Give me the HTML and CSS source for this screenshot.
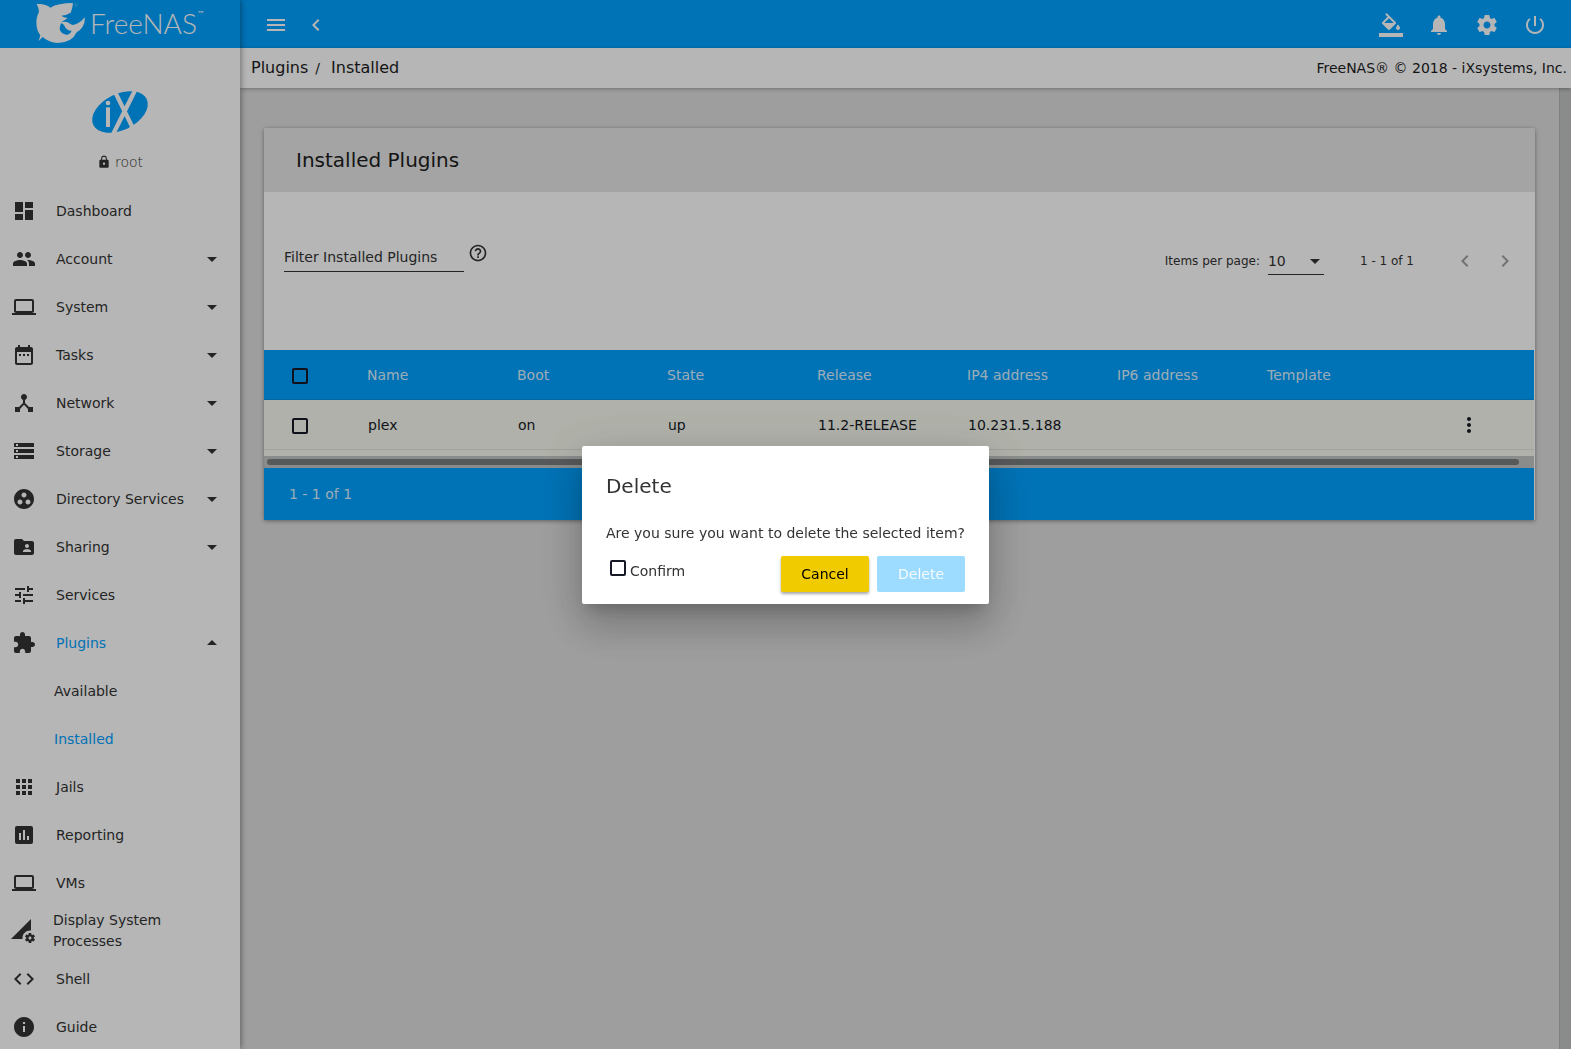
FILE: index.html
```html
<!DOCTYPE html>
<html lang="en">
<head>
<meta charset="utf-8">
<title>FreeNAS - Installed Plugins</title>
<link rel="stylesheet" href="styles.css">
</head>
<body>
<svg class="sprite" aria-hidden="true">
  <symbol id="dashboard" viewBox="0 0 24 24"><path d="M3 13h8V3H3v10zm0 8h8v-6H3v6zm10 0h8V11h-8v10zm0-18v6h8V3h-8z"/></symbol>
  <symbol id="group" viewBox="0 0 24 24"><path d="M16 11c1.66 0 2.99-1.34 2.99-3S17.66 5 16 5s-3 1.34-3 3 1.34 3 3 3zm-8 0c1.66 0 2.99-1.34 2.99-3S9.66 5 8 5 5 6.34 5 8s1.34 3 3 3zm0 2c-2.33 0-7 1.17-7 3.500V19h14v-2.500c0-2.330-4.670-3.500-7-3.500zm8 0c-.29 0-.62.02-.97.050 1.160.840 1.970 1.970 1.970 3.450V19h6v-2.500c0-2.330-4.670-3.500-7-3.500z"/></symbol>
  <symbol id="laptop" viewBox="0 0 24 24"><path d="M20 18c1.100 0 2-.9 2-2V6c0-1.100-.9-2-2-2H4c-1.100 0-2 .9-2 2v10c0 1.100.9 2 2 2H0v2h24v-2h-4zM4 6h16v10H4V6z"/></symbol>
  <symbol id="date" viewBox="0 0 24 24"><path d="M9 11H7v2h2v-2zm4 0h-2v2h2v-2zm4 0h-2v2h2v-2zm2-7h-1V2h-2v2H8V2H6v2H5c-1.110 0-1.990.9-1.990 2L3 20c0 1.100.890 2 2 2h14c1.100 0 2-.9 2-2V6c0-1.100-.9-2-2-2zm0 16H5V9h14v11z"/></symbol>
  <symbol id="hub" viewBox="0 0 24 24"><path d="M17 16l-4-4V8.820C14.160 8.400 15 7.300 15 6c0-1.660-1.340-3-3-3S9 4.340 9 6c0 1.300.84 2.400 2 2.820V12l-4 4H3v5h5v-3.050l4-4.200 4 4.200V21h5v-5h-4z"/></symbol>
  <symbol id="storage" viewBox="0 0 24 24"><path d="M2 20h20v-4H2v4zm2-3h2v2H4v-2zM2 4v4h20V4H2zm4 3H4V5h2v2zm-4 7h20v-4H2v4zm2-3h2v2H4v-2z"/></symbol>
  <symbol id="workgroup" viewBox="0 0 24 24"><path d="M12 2C6.480 2 2 6.480 2 12s4.480 10 10 10 10-4.480 10-10S17.520 2 12 2zM8 17.500c-1.380 0-2.500-1.120-2.500-2.500s1.120-2.500 2.500-2.500 2.500 1.120 2.500 2.500-1.120 2.500-2.500 2.500zM9.500 8c0-1.380 1.120-2.500 2.500-2.500s2.500 1.120 2.500 2.500-1.120 2.500-2.500 2.500S9.500 9.380 9.500 8zm6.500 9.500c-1.380 0-2.500-1.120-2.500-2.500s1.120-2.500 2.500-2.500 2.500 1.120 2.500 2.500-1.120 2.500-2.500 2.500z"/></symbol>
  <symbol id="shared" viewBox="0 0 24 24"><path d="M20 6h-8l-2-2H4c-1.100 0-1.990.9-1.990 2L2 18c0 1.100.9 2 2 2h16c1.100 0 2-.9 2-2V8c0-1.100-.9-2-2-2zm-5 3c1.100 0 2 .9 2 2s-.9 2-2 2-2-.9-2-2 .9-2 2-2zm4 8h-8v-1c0-1.330 2.670-2 4-2s4 .67 4 2v1z"/></symbol>
  <symbol id="tune" viewBox="0 0 24 24"><path d="M3 17v2h6v-2H3zM3 5v2h10V5H3zm10 16v-2h8v-2h-8v-2h-2v6h2zM7 9v2H3v2h4v2h2V9H7zm14 4v-2H11v2h10zm-6-4h2V7h4V5h-4V3h-2v6z"/></symbol>
  <symbol id="extension" viewBox="0 0 24 24"><path d="M20.500 11H19V7c0-1.100-.9-2-2-2h-4V3.500C13 2.120 11.880 1 10.500 1S8 2.120 8 3.500V5H4c-1.100 0-1.990.9-1.990 2v3.800H3.500c1.490 0 2.700 1.210 2.700 2.700s-1.210 2.700-2.700 2.700H2V20c0 1.100.9 2 2 2h3.800v-1.500c0-1.490 1.210-2.700 2.700-2.700 1.490 0 2.700 1.210 2.700 2.700V22H17c1.100 0 2-.9 2-2v-4h1.500c1.380 0 2.500-1.120 2.500-2.500S21.880 11 20.500 11z"/></symbol>
  <symbol id="apps" viewBox="0 0 24 24"><path d="M4 8h4V4H4v4zm6 12h4v-4h-4v4zm-6 0h4v-4H4v4zm0-6h4v-4H4v4zm6 0h4v-4h-4v4zm6-10v4h4V4h-4zm-6 4h4V4h-4v4zm6 6h4v-4h-4v4zm0 6h4v-4h-4v4z"/></symbol>
  <symbol id="chart" viewBox="0 0 24 24"><path d="M19 3H5c-1.100 0-2 .9-2 2v14c0 1.100.9 2 2 2h14c1.100 0 2-.9 2-2V5c0-1.100-.9-2-2-2zM9 17H7v-7h2v7zm4 0h-2V7h2v10zm4 0h-2v-4h2v4z"/></symbol>
  <symbol id="process" viewBox="0 0 24 24"><path d="M18.990 11.500c.34 0 .67.030 1 .070L20 0 0 20h11.560c-.040-.33-.070-.66-.070-1 0-4.140 3.360-7.500 7.500-7.500zm3.710 7.990c.020-.16.040-.32.040-.49 0-.17-.010-.33-.040-.49l1.060-.83c.090-.080.120-.21.060-.32l-1-1.730c-.060-.110-.190-.150-.310-.110l-1.240.5c-.260-.2-.540-.37-.850-.49l-.190-1.320c-.010-.12-.120-.21-.240-.21h-2c-.120 0-.230.090-.250.210l-.190 1.320c-.3.130-.590.290-.850.490l-1.240-.5c-.110-.040-.240 0-.310.110l-1 1.730c-.060.110-.040.24.060.32l1.060.83c-.020.16-.030.32-.030.49 0 .17.010.33.030.49l-1.060.83c-.090.080-.120.210-.060.320l1 1.730c.060.110.190.150.310.110l1.240-.5c.260.2.540.37.850.49l.190 1.320c.020.12.120.21.250.21h2c.120 0 .230-.090.240-.21l.190-1.320c.3-.13.590-.29.840-.49l1.250.5c.110.040.240 0 .310-.110l1-1.730c.060-.110.030-.240-.060-.320l-1.050-.83zm-3.710 1.010c-.830 0-1.500-.67-1.500-1.500s.67-1.500 1.500-1.500 1.500.67 1.500 1.500-.67 1.500-1.500 1.500z"/></symbol>
  <symbol id="code" viewBox="0 0 24 24"><path d="M9.400 16.600L4.800 12l4.600-4.600L8 6l-6 6 6 6 1.400-1.400zm5.200 0l4.600-4.600-4.600-4.600L16 6l6 6-6 6-1.400-1.400z"/></symbol>
  <symbol id="info" viewBox="0 0 24 24"><path d="M12 2C6.480 2 2 6.480 2 12s4.480 10 10 10 10-4.480 10-10S17.520 2 12 2zm1 15h-2v-6h2v6zm0-8h-2V7h2v2z"/></symbol>
  <symbol id="down" viewBox="0 0 24 24"><path d="M7 10l5 5 5-5z"/></symbol>
  <symbol id="up" viewBox="0 0 24 24"><path d="M7 14l5-5 5 5z"/></symbol>
  <symbol id="menu" viewBox="0 0 24 24"><path d="M3 18h18v-2H3v2zm0-5h18v-2H3v2zm0-7v2h18V6H3z"/></symbol>
  <symbol id="left" viewBox="0 0 24 24"><path d="M15.410 7.410L14 6l-6 6 6 6 1.410-1.410L10.830 12z"/></symbol>
  <symbol id="right" viewBox="0 0 24 24"><path d="M10 6L8.590 7.410 13.170 12l-4.580 4.590L10 18l6-6z"/></symbol>
  <symbol id="fill" viewBox="0 0 24 24"><path d="M16.560 8.940L7.620 0 6.210 1.410l2.380 2.380-5.150 5.150c-.59.59-.59 1.540 0 2.120l5.500 5.500c.29.29.68.44 1.060.44s.77-.15 1.060-.44l5.500-5.500c.59-.58.59-1.530 0-2.120zM5.210 10L10 5.210 14.790 10H5.210zM19 11.500s-2 2.170-2 3.500c0 1.100.9 2 2 2s2-.9 2-2c0-1.330-2-3.500-2-3.500zM0 20h24v4H0z"/></symbol>
  <symbol id="bell" viewBox="0 0 24 24"><path d="M12 22c1.100 0 2-.9 2-2h-4c0 1.100.89 2 2 2zm6-6v-5c0-3.070-1.640-5.640-4.500-6.320V4c0-.83-.67-1.500-1.500-1.500s-1.500.67-1.500 1.500v.68C7.630 5.360 6 7.920 6 11v5l-2 2v1h16v-1l-2-2z"/></symbol>
  <symbol id="gear" viewBox="0 0 24 24"><path d="M19.430 12.980c.04-.32.07-.64.07-.98s-.03-.66-.07-.98l2.110-1.650c.19-.15.24-.42.12-.64l-2-3.460c-.12-.22-.39-.3-.61-.22l-2.490 1c-.52-.4-1.080-.73-1.690-.98l-.38-2.650C14.460 2.180 14.250 2 14 2h-4c-.25 0-.46.18-.49.42l-.38 2.650c-.61.25-1.170.59-1.690.98l-2.490-1c-.23-.09-.49 0-.61.22l-2 3.460c-.13.22-.07.49.12.64l2.110 1.650c-.04.32-.07.65-.07.98s.03.66.07.98l-2.110 1.650c-.19.15-.24.42-.12.64l2 3.460c.12.22.39.3.61.22l2.490-1c.52.4 1.080.73 1.690.98l.38 2.650c.03.24.24.42.49.42h4c.25 0 .46-.18.49-.42l.38-2.650c.61-.25 1.170-.59 1.690-.98l2.490 1c.23.09.49 0 .61-.22l2-3.460c.12-.22.07-.49-.12-.64l-2.110-1.650zM12 15.500c-1.930 0-3.500-1.570-3.500-3.500s1.570-3.500 3.500-3.500 3.500 1.570 3.500 3.500-1.570 3.500-3.500 3.500z"/></symbol>
  <symbol id="power" viewBox="0 0 24 24"><path d="M13 3h-2v10h2V3zm4.830 2.170l-1.420 1.420C17.990 7.860 19 9.810 19 12c0 3.870-3.130 7-7 7s-7-3.130-7-7c0-2.190 1.010-4.140 2.580-5.420L6.170 5.170C4.230 6.820 3 9.260 3 12c0 4.970 4.030 9 9 9s9-4.030 9-9c0-2.740-1.230-5.180-3.170-6.830z"/></symbol>
  <symbol id="help" viewBox="0 0 24 24"><path d="M11 18h2v-2h-2v2zm1-16C6.480 2 2 6.480 2 12s4.480 10 10 10 10-4.480 10-10S17.520 2 12 2zm0 18c-4.410 0-8-3.590-8-8s3.590-8 8-8 8 3.590 8 8-3.590 8-8 8zm0-14c-2.210 0-4 1.790-4 4h2c0-1.100.9-2 2-2s2 .9 2 2c0 2-3 1.750-3 5h2c0-2.250 3-2.500 3-5 0-2.210-1.790-4-4-4z"/></symbol>
  <symbol id="lock" viewBox="0 0 24 24"><path d="M18 8h-1V6c0-2.760-2.240-5-5-5S7 3.240 7 6v2H6c-1.100 0-2 .9-2 2v10c0 1.100.9 2 2 2h12c1.100 0 2-.9 2-2V10c0-1.100-.9-2-2-2zm-6 9c-1.100 0-2-.9-2-2s.9-2 2-2 2 .9 2 2-.9 2-2 2zm3.100-9H8.900V6c0-1.710 1.390-3.100 3.100-3.100 1.710 0 3.100 1.390 3.100 3.100v2z"/></symbol>
  <symbol id="more" viewBox="0 0 24 24"><path d="M12 8c1.100 0 2-.9 2-2s-.9-2-2-2-2 .9-2 2 .9 2 2 2zm0 2c-1.100 0-2 .9-2 2s.9 2 2 2 2-.9 2-2-.9-2-2-2zm0 6c-1.100 0-2 .9-2 2s.9 2 2 2 2-.9 2-2-.9-2-2-2z"/></symbol>
</svg>

<div class="app">
  <aside class="sidebar">
    <a class="brand" href="#">
      <svg class="fish" viewBox="0 0 150 126" aria-hidden="true">
        <path fill-rule="evenodd" d="M2 6Q28 4 43 17Q66 3 111 3Q110 18 104 32Q92 40 76 41Q82 47 95 48Q88 54 76 60Q92 58 99 63Q103 68 111 69Q132 65 146 46Q149 74 122 91Q108 122 66 123Q38 122 20 105L8 117L13 100Q-2 80 2 50Q4 38 9 30Q8 16 2 6ZM76 63Q69 73 72 85Q79 99 95 98Q107 93 106 86Q92 85 87 74Q84 67 76 63Z"/>
        <circle cx="120" cy="9" r="4" class="mark"/>
      </svg>
      <span class="wordmark">FreeNAS</span><span class="tm">™</span>
    </a>
    <div class="user">
      <svg class="ix" viewBox="0 0 168 126" role="img" aria-label="iX">
        <ellipse cx="84" cy="63" rx="89" ry="54" transform="rotate(-26 84 63)"/>
        <path class="cut" d="M67 -2L126 118M130 -4L64 128"/>
        <rect class="gap" x="42" y="49" width="12" height="59"/>
        <circle class="gap" cx="48" cy="36" r="7"/>
      </svg>
      <div class="user-name"><svg class="lock"><use href="#lock"/></svg><span>root</span></div>
    </div>
    <nav class="nav">
      <a href="#"><svg><use href="#dashboard"/></svg><span>Dashboard</span></a>
      <a href="#"><svg><use href="#group"/></svg><span>Account</span><svg class="arrow"><use href="#down"/></svg></a>
      <a href="#"><svg><use href="#laptop"/></svg><span>System</span><svg class="arrow"><use href="#down"/></svg></a>
      <a href="#"><svg><use href="#date"/></svg><span>Tasks</span><svg class="arrow"><use href="#down"/></svg></a>
      <a href="#"><svg><use href="#hub"/></svg><span>Network</span><svg class="arrow"><use href="#down"/></svg></a>
      <a href="#"><svg><use href="#storage"/></svg><span>Storage</span><svg class="arrow"><use href="#down"/></svg></a>
      <a href="#"><svg><use href="#workgroup"/></svg><span>Directory Services</span><svg class="arrow"><use href="#down"/></svg></a>
      <a href="#"><svg><use href="#shared"/></svg><span>Sharing</span><svg class="arrow"><use href="#down"/></svg></a>
      <a href="#"><svg><use href="#tune"/></svg><span>Services</span></a>
      <a href="#"><svg><use href="#extension"/></svg><span class="active">Plugins</span><svg class="arrow"><use href="#up"/></svg></a>
      <a href="#" class="sub"><span>Available</span></a>
      <a href="#" class="sub"><span class="active">Installed</span></a>
      <a href="#"><svg><use href="#apps"/></svg><span>Jails</span></a>
      <a href="#"><svg><use href="#chart"/></svg><span>Reporting</span></a>
      <a href="#"><svg><use href="#laptop"/></svg><span>VMs</span></a>
      <a href="#" class="wrapped"><svg><use href="#process"/></svg><span>Display System Processes</span></a>
      <a href="#"><svg><use href="#code"/></svg><span>Shell</span></a>
      <a href="#"><svg><use href="#info"/></svg><span>Guide</span></a>
    </nav>
  </aside>

  <div class="main">
    <header class="topbar">
      <button class="slim" aria-label="Toggle menu"><svg><use href="#menu"/></svg></button>
      <button class="slim" aria-label="Collapse"><svg><use href="#left"/></svg></button>
      <span class="spacer"></span>
      <button aria-label="Theme"><svg><use href="#fill"/></svg></button>
      <button aria-label="Alerts"><svg><use href="#bell"/></svg></button>
      <button aria-label="Settings"><svg><use href="#gear"/></svg></button>
      <button aria-label="Power"><svg><use href="#power"/></svg></button>
    </header>
    <div class="crumbs">
      <a href="#">Plugins</a><span class="slash">/</span><a href="#">Installed</a>
      <span class="copyright">FreeNAS® © 2018 - iXsystems, Inc.</span>
    </div>
    <div class="view">
      <main class="content">
        <section class="card">
          <h1>Installed Plugins</h1>
          <div class="toolbar">
            <div class="filter">
              <input type="text" placeholder="Filter Installed Plugins" aria-label="Filter Installed Plugins">
              <svg><use href="#help"/></svg>
            </div>
            <div class="pager">
              <label for="size">Items per page:</label>
              <span class="picker">
                <select id="size"><option>10</option></select>
                <svg><use href="#down"/></svg>
              </span>
              <span class="range">1 - 1 of 1</span>
              <button aria-label="Previous page"><svg><use href="#left"/></svg></button>
              <button aria-label="Next page"><svg><use href="#right"/></svg></button>
            </div>
          </div>
          <div class="grid">
            <table>
              <colgroup><col class="c-check"><col class="c-data" span="7"><col></colgroup>
              <thead>
                <tr><th><input type="checkbox" aria-label="Select all"></th><th>Name</th><th>Boot</th><th>State</th><th>Release</th><th>IP4 address</th><th>IP6 address</th><th>Template</th><th></th></tr>
              </thead>
              <tbody>
                <tr><td><input type="checkbox" aria-label="Select plex"></td><td>plex</td><td>on</td><td>up</td><td>11.2-RELEASE</td><td>10.231.5.188</td><td></td><td></td><td class="row-menu"><button aria-label="Actions"><svg><use href="#more"/></svg></button></td></tr>
              </tbody>
            </table>
            <div class="hscroll"><div class="thumb"></div></div>
            <div class="summary">1 - 1 of 1</div>
          </div>
        </section>
      </main>
      <div class="vscroll"></div>
    </div>
  </div>
</div>

<div class="backdrop">
  <div class="dialog" role="dialog" aria-modal="true" aria-labelledby="dlg-title">
    <h2 id="dlg-title">Delete</h2>
    <p>Are you sure you want to delete the selected item?</p>
    <div class="actions">
      <label class="confirm"><input type="checkbox">Confirm</label>
      <button class="cancel">Cancel</button>
      <button class="delete" disabled>Delete</button>
    </div>
  </div>
</div>
</body>
</html>
```
FILE: styles.css
```css
* { box-sizing: border-box; }

:root {
  --blue: #00a1ff;
  --ink: #333;
}

body {
  margin: 0;
  height: 100vh;
  overflow: hidden;
  font: 14px/20px "DejaVu Sans", sans-serif;
  color: #1c1c1c;
  background: #dedede;
}

a { color: inherit; text-decoration: none; }
svg { width: 24px; height: 24px; fill: currentColor; flex: none; display: block; }
.sprite { display: none; }

button {
  display: flex;
  align-items: center;
  justify-content: center;
  padding: 0;
  border: 0;
  background: none;
  color: inherit;
  font: inherit;
}

input[type="checkbox"] {
  appearance: none;
  display: block;
  width: 16px;
  height: 16px;
  margin: 0;
  border: 2px solid #161a26;
  border-radius: 2px;
  flex: none;
}

.app { display: flex; height: 100%; }

/* Sidebar */
.sidebar {
  width: 240px;
  flex: none;
  overflow: hidden;
  background: #fff;
  color: var(--ink);
  box-shadow: 1px 0 6px rgba(0, 0, 0, .4);
  z-index: 2;
}

.brand {
  display: flex;
  height: 48px;
  padding: 2px 0 0 36px;
  background: var(--blue);
  color: #fff;
}
.fish { width: 50px; height: 42px; }
.fish .mark { fill: none; stroke: #fff; opacity: .6; }
.wordmark { padding-left: 4px; font: 300 28px/42px Lato, sans-serif; }
.tm { font-size: 8px; line-height: 26px; }

.user {
  display: flex;
  flex-direction: column;
  align-items: center;
  height: 139px;
  padding-top: 43px;
}
.ix { width: 56px; height: 42px; fill: var(--blue); overflow: visible; }
.ix .cut { stroke: #fff; stroke-width: 13px; }
.ix .gap { fill: #fff; }
.user-name { display: flex; align-items: center; gap: 4px; margin-top: 19px; }
.user-name span { font-weight: 200; }
.lock { width: 14px; height: 14px; }

.nav a {
  display: flex;
  align-items: center;
  height: 48px;
  padding: 0 16px 0 12px;
  gap: 20px;
  white-space: nowrap;
}
.nav .arrow { margin-left: auto; }
.nav span + .arrow { margin-left: auto; }
.nav a span { flex: 1; min-width: 0; margin-right: -20px; }
.nav .active { color: var(--blue); }
.nav .sub { padding-left: 54px; }
.nav .wrapped { gap: 18px; padding: 0 40px 0 11px; line-height: 21px; white-space: normal; }

/* Header */
.main { display: flex; flex-direction: column; flex: 1; min-width: 0; }
.topbar {
  display: flex;
  align-items: center;
  height: 48px;
  padding: 2px 12px 0 16px;
  background: var(--blue);
  color: #fff;
}
.topbar button { width: 48px; height: 46px; }
.topbar .slim { width: 40px; }
.spacer { flex: 1; }

.crumbs {
  display: flex;
  align-items: center;
  height: 40px;
  padding: 0 4px 0 11px;
  background: #fff;
  font-size: 16px;
  box-shadow: 0 1px 4px rgba(0, 0, 0, .3);
  z-index: 1;
}
.slash { padding: 0 11px 0 7px; font-size: 14px; }
.copyright { margin-left: auto; font-size: 14px; }

/* Content */
.view { display: flex; flex: 1; min-height: 0; }
.content { flex: 1; min-width: 0; padding: 40px 24px; }
.vscroll { width: 12px; background: #c2c5c3; border-left: 1px solid #b4b6b5; }

.card {
  background: #fff;
  border-radius: 3px 3px 0 0;
  box-shadow: 0 1px 4px rgba(0, 0, 0, .4);
}
.card h1 {
  margin: 0;
  padding: 0 32px;
  font-size: 20px;
  font-weight: 400;
  line-height: 64px;
  background: #e6e6e6;
  border-radius: 3px 3px 0 0;
}

.toolbar {
  display: flex;
  align-items: flex-start;
  justify-content: space-between;
  height: 158px;
  padding: 48px 10px 0 20px;
  color: var(--ink);
}
.filter { display: flex; gap: 4px; padding-top: 3px; }
.filter input {
  width: 180px;
  height: 29px;
  padding: 0 0 1px;
  border: 0;
  border-bottom: 1px solid var(--ink);
  background: none;
  font: inherit;
}
.filter input::placeholder { color: var(--ink); opacity: 1; }
.filter svg { width: 20px; height: 20px; }

.pager { display: flex; align-items: center; height: 42px; font-size: 12px; }
.pager button { width: 40px; height: 40px; color: #a0a0a0; }
.picker { display: grid; margin-left: 8px; }
.picker > * { grid-area: 1 / 1; }
.picker svg { width: 24px; margin-left: 35px; align-self: center; }
.picker select {
  appearance: none;
  width: 56px;
  height: 28px;
  padding: 0;
  border: 0;
  border-bottom: 1px solid var(--ink);
  background: none;
  color: inherit;
  font: 14px/20px "DejaVu Sans", sans-serif;
}
.picker { width: 56px; }
.range { margin: 0 31px 0 36px; }

.grid { margin-right: 1px; }
table { width: 100%; table-layout: fixed; border-collapse: separate; border-spacing: 0; }
.c-check { width: 80px; }
.c-data { width: 150px; }
th, td { height: 50px; padding: 0 0 0 24px; text-align: left; font-weight: 400; }
th { padding-left: 23px; border-bottom: 1px solid #0091e6; }
td { border-bottom: 1px solid #e2e3db; }
th:first-child, td:first-child { padding: 2px 0 0 28px; }
thead { background: var(--blue); color: rgba(255, 255, 255, .87); }
tbody { background: #f7f9ef; color: #161a26; }
td.row-menu { padding: 0; }
.row-menu button { width: 32px; height: 32px; margin: 0 49px 0 auto; }

.hscroll {
  height: 18px;
  padding: 3px 15px 3px 3px;
  border-top: 6px solid #f7f9ef;
  background: #c2c5c3;
}
.thumb { height: 6px; border-radius: 3px; background: #797d7e; }
.summary {
  height: 52px;
  padding-left: 25px;
  line-height: 52px;
  background: var(--blue);
  color: rgba(255, 255, 255, .87);
}

/* Dialog */
.backdrop {
  position: fixed;
  inset: 0;
  z-index: 10;
  display: flex;
  align-items: center;
  justify-content: center;
  background: rgba(0, 0, 0, .288);
}
.dialog {
  padding: 24px 24px 12px;
  border-radius: 2px;
  background: #fff;
  color: #333;
  box-shadow: 0 11px 15px -7px rgba(0, 0, 0, .2), 0 24px 38px 3px rgba(0, 0, 0, .14), 0 9px 46px 8px rgba(0, 0, 0, .12);
}
.dialog h2 { margin: 0 0 20px; font-size: 20px; font-weight: 400; line-height: 32px; }
.dialog p { margin: 0 0 12px; line-height: 22px; }
.actions { display: flex; gap: 8px; }
.confirm {
  display: flex;
  align-items: flex-start;
  gap: 4px;
  margin-right: auto;
  padding: 4px 0 0 4px;
  line-height: 22px;
}
.actions button { width: 88px; height: 36px; border-radius: 2px; }
.cancel { background: #f0cb00; color: #000; box-shadow: 0 2px 3px rgba(0, 0, 0, .35); }
.delete { background: #9edcff; color: #f4fbff; }
```
